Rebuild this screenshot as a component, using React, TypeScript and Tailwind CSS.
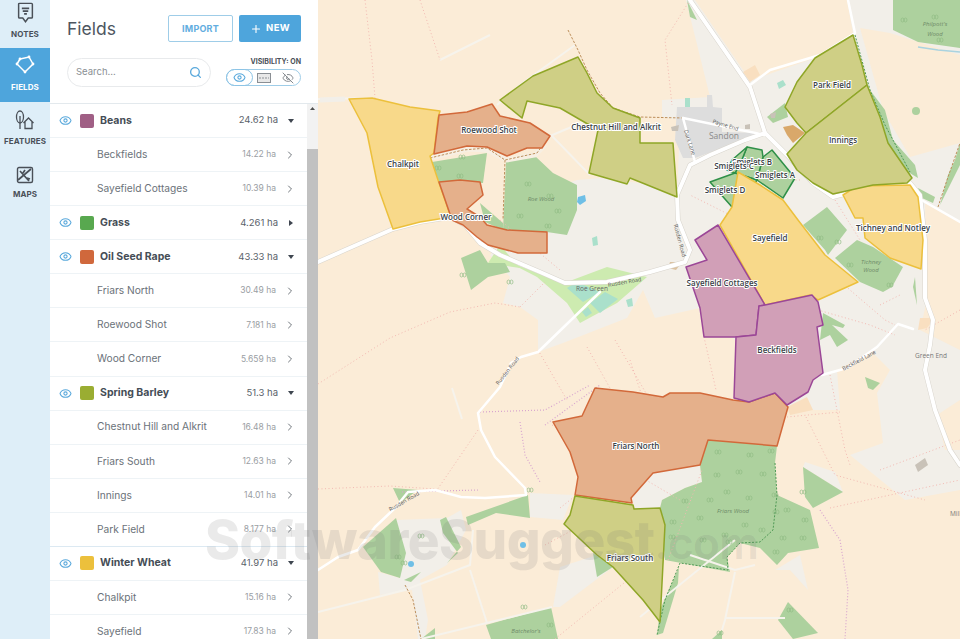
import { ChevronRight, Eye, EyeOff, Plus, Search } from 'lucide-react';

type Row = { name: string; ha: string; color?: string; open?: boolean; strong?: boolean };

const rows: Row[] = [
  { name: 'Beans', ha: '24.62 ha', color: 'bg-[#a05f85]', open: true },
  { name: 'Beckfields', ha: '14.22 ha' },
  { name: 'Sayefield Cottages', ha: '10.39 ha' },
  { name: 'Grass', ha: '4.261 ha', color: 'bg-[#58a84f]' },
  { name: 'Oil Seed Rape', ha: '43.33 ha', color: 'bg-[#d0683c]', open: true },
  { name: 'Friars North', ha: '30.49 ha' },
  { name: 'Roewood Shot', ha: '7.181 ha' },
  { name: 'Wood Corner', ha: '5.659 ha' },
  { name: 'Spring Barley', ha: '51.3 ha', color: 'bg-[#9aad32]', open: true },
  { name: 'Chestnut Hill and Alkrit', ha: '16.48 ha' },
  { name: 'Friars South', ha: '12.63 ha' },
  { name: 'Innings', ha: '14.01 ha' },
  { name: 'Park Field', ha: '8.177 ha', strong: true },
  { name: 'Winter Wheat', ha: '41.97 ha', color: 'bg-[#ecc03c]', open: true },
  { name: 'Chalkpit', ha: '15.16 ha' },
  { name: 'Sayefield', ha: '17.83 ha' },
];

const woods = [
  '506,162 535,156 553,173 577,185 577,210 567,235 547,232 503,230',
  '432,162 487,153 483,183 439,182',
  '480,203 503,223 503,230 485,222',
  '708,440 777,446 775,463 777,495 810,510 819,548 788,553 777,565 760,548 740,543 727,557 730,572 665,560 660,508 662,500 685,488 702,482 700,465',
  '593,553 613,567 597,577',
  '486,625 551,607 558,639 491,639',
  '788,602 818,633 793,639 778,620',
  '679,567 678,583 663,633 657,635 660,610',
  '712,639 722,630 722,639',
  '835,258 857,240 873,247 903,267 892,287 883,292 860,282',
  '803,225 827,207 847,230 828,255 825,250',
  '823,313 845,325 843,328 832,325 848,340 837,347 830,335 820,340',
  '865,377 880,383 873,390 868,388',
  '915,277 917,305 913,287',
  '893,0 960,0 960,48 918,42 893,30',
  '918,188 935,197 933,203 922,198',
  '870,90 885,110 893,140 915,165 918,178 908,172 888,145 878,112',
  '940,205 948,175 955,160 960,143 960,165 950,185',
  '461,258 471,290 488,277 510,272 505,263 488,263 480,250',
  '393,488 418,490 400,503',
  '466,517 528,495 530,518 496,513 468,525',
  '363,547 396,518 406,553 400,578 381,572',
  '440,520 446,517 461,547 447,563 458,553 443,533',
  '404,580 421,572 411,582',
  '421,639 435,628 435,639',
  '803,467 843,492 813,508 805,497',
  '767,117 785,103 788,117 773,123',
  '816,160 825,170 835,180 825,178',
  '687,0 697,20 690,17',
];

const trees = [
  [528,184],[550,196],[558,211],[520,216],[548,226],[462,157],[460,176],[438,168],[838,242],[850,265],[890,285],[820,238],
  [718,452],[750,455],[771,451],[717,475],[739,472],[763,474],[727,492],[749,498],[775,495],[685,501],[710,500],[673,522],[700,518],
  [725,535],[745,525],[762,530],[776,512],[672,537],[703,540],[729,542],[787,510],[805,520],[783,538],[803,538],[776,552],[904,20],[935,17],[940,40],
  [803,492],[524,607],[550,625],[421,536],[404,563],[398,557],[510,282],[463,275],[530,490],[790,610],[720,633],
];

const tracks = [
  '318,99 372,98',
  '366,112 440,111',
  '497,105 520,85 575,45',
  '550,136 600,115',
  '552,136 590,175',
  '440,60 490,35',
  '318,612 405,590 470,565 473,530',
  '470,570 487,623',
  '421,639 552,607',
  '700,308 705,337',
  '640,617 735,540',
  '462,419 452,388',
  '690,555 735,570 755,565',
  '735,572 725,620 722,630',
  '725,618 785,618',
];

const pink = [
  '318,384 390,338 450,312 495,303 520,307',
  '520,307 545,282',
  '478,430 437,490',
  '318,489 390,486 435,489',
  '538,350 567,400',
  '587,347 625,415',
  '615,340 650,400',
  '704,337 716,390',
  '668,560 702,470',
  '500,220 560,270',
  '820,262 850,290 885,320 895,325',
  '818,310 870,325 895,335',
  '880,305 900,295',
  '960,310 925,330',
  '830,375 845,450 850,465',
  '787,417 840,412',
  '420,0 440,60',
  '365,0 372,60 375,98',
  '690,0 665,40 672,105',
  '800,180 760,180',
  '730,215 690,195',
  '835,200 860,240',
  '545,545 632,498',
  '590,480 640,420',
  '630,360 650,420',
  '552,425 680,500',
  '560,508 608,470',
  '555,639 640,570',
  '806,417 835,475 925,500',
  '880,470 960,440',
  '830,508 960,480',
];

const purple = [
  '402,492 478,490',
  '480,412 545,410 590,385',
  '520,422 525,455 540,482',
  '820,510 840,540 848,590 845,639',
  '545,425 600,385',
];

const labels: [string, number, number][] = [
  ['Roewood Shot', 489, 133],
  ['Chalkpit', 403, 167],
  ['Wood Corner', 466, 220],
  ['Chestnut Hill and Alkrit', 616, 130],
  ['Park Field', 832, 88],
  ['Innings', 843, 143],
  ['Smiglets B', 752, 165],
  ['Smiglets C', 734, 169],
  ['Smiglets A', 775, 178],
  ['Smiglets D', 725, 193],
  ['Sayefield', 770, 241],
  ['Tichney and Notley', 893, 231],
  ['Sayefield Cottages', 722, 286],
  ['Beckfields', 777, 353],
  ['Friars North', 636, 449],
  ['Friars South', 630, 561],
];

function NavItem({ label, active, gap, children }: { label: string; active?: boolean; gap: string; children: React.ReactNode }) {
  return (
    <div className={`flex h-[53.500px] flex-col items-center justify-end pb-[9.500px] ${active ? 'bg-[#4ea5dc] text-white' : 'text-[#4a5058]'}`}>
      <div className={gap}>{children}</div>
      <span className="text-[8px] leading-[10px] font-bold tracking-[0.1px]">{label}</span>
    </div>
  );
}

function Sidebar() {
  return (
    <nav className="flex w-[50px] shrink-0 flex-col bg-[#deeef8]">
      <div className="-mt-[5.500px]">
        <NavItem label="NOTES" gap="mb-[5px]">
          <svg width="17" height="22" viewBox="0 0 18 24" fill="none" stroke="currentColor" strokeWidth="1.600" className="block">
            <path d="M2.500 1.500h13a1 1 0 0 1 1 1v14a1 1 0 0 1-1 1h-3.500L9 21.500 6 17.500H2.500a1 1 0 0 1-1-1v-14a1 1 0 0 1 1-1z" />
            <path d="M5 7h8M6 10h6M7.500 13h3" strokeWidth="1.900" />
          </svg>
        </NavItem>
      </div>
      <NavItem label="FIELDS" active gap="mb-[7px]">
        <svg width="20" height="20" viewBox="0 0 20 20" fill="none" stroke="currentColor" strokeWidth="1.500" className="block">
          <path d="M5 4l9-2 4 7-8 8L2 9z" />
          <g fill="currentColor" stroke="none">
            <circle cx="5" cy="4" r="1.400" />
            <circle cx="14" cy="2" r="1.400" />
            <circle cx="18" cy="9" r="1.400" />
            <circle cx="10" cy="17" r="1.400" />
            <circle cx="2" cy="9" r="1.400" />
          </g>
        </svg>
      </NavItem>
      <NavItem label="FEATURES" gap="mb-[5.500px]">
        <svg width="20" height="20" viewBox="0 0 20 20" fill="none" stroke="currentColor" strokeWidth="1.300" className="block">
          <ellipse cx="5" cy="7" rx="3.500" ry="6" />
          <path d="M5 6v13M8.500 13l5-5 5 5M10 12v6.500h7V12" />
        </svg>
      </NavItem>
      <NavItem label="MAPS" gap="mb-[5px]">
        <svg width="18" height="18" viewBox="0 0 18 18" fill="none" stroke="currentColor" strokeWidth="1.400" className="block">
          <rect x="1.500" y="1.500" width="15" height="15" rx="1.500" />
          <path d="M2 14L15 3M4 5l9 10M9 4l-2 3M11 12l3 1" strokeWidth="1.700" />
        </svg>
      </NavItem>
    </nav>
  );
}

function ListRow({ row }: { row: Row }) {
  if (row.color) {
    return (
      <div className="flex h-[34.070px] items-center border-b border-[#eef3f6] pr-[13px] pl-[9px]">
        <div className="flex w-[13px] shrink-0 justify-center">
          <Eye size={13} strokeWidth={2} className="text-[#5aa9dc]" />
        </div>
        <div className={`ml-[8px] size-[14px] shrink-0 rounded-[2px] ${row.color}`} />
        <span className="ml-[6px] flex-1 text-[10.500px] font-bold text-[#454d56]">{row.name}</span>
        <span className="text-[9.500px] text-[#5a626a]">{row.ha}</span>
        <svg width="6" height="4" viewBox="0 0 6 4" className={`ml-[10px] ${row.open ? '' : '-rotate-90'}`}>
          <path d="M0 0h6L3 4z" fill="#3f4650" />
        </svg>
      </div>
    );
  }
  return (
    <div className={`flex h-[34.070px] items-center border-b pr-[11px] pl-[47px] ${row.strong ? 'border-[#dce9f2]' : 'border-[#eef3f6]'}`}>
      <span className="flex-1 text-[10.200px] text-[#6b7279]">{row.name}</span>
      <span className="text-[8.500px] text-[#9a9ea3]">{row.ha}</span>
      <ChevronRight size={12} strokeWidth={2} className="ml-[8px] text-[#70767c]" />
    </div>
  );
}

function Panel() {
  return (
    <aside className="flex w-[268px] shrink-0 flex-col bg-white">
      <header className="h-[104px] shrink-0 border-b border-[#e3e9ed] pr-[17px]">
        <div className="flex h-[58px] items-start pt-[15px] pl-[17px]">
          <h1 className="mt-[2px] flex-1 text-[17.500px] leading-[24px] font-normal text-[#4d5660]">Fields</h1>
          <button className="h-[27px] w-[65px] rounded-[2px] border border-[#9fcde8] text-[9px] font-bold tracking-[0.2px] text-[#62ade0]">IMPORT</button>
          <button className="ml-[6px] flex h-[27px] w-[62px] items-center justify-center gap-[4px] rounded-[2px] bg-[#4ea5dc] text-[9.500px] font-bold tracking-[0.3px] text-white">
            <Plus size={12} strokeWidth={2.200} />
            NEW
          </button>
        </div>
        <div className="flex items-start pl-[17px]">
          <div className="flex h-[29px] w-[144px] items-center rounded-full border border-[#e8eaec] pr-[8px] pl-[8px]">
            <span className="flex-1 text-[9.500px] text-[#8a8f94]">Search...</span>
            <Search size={13} strokeWidth={2.400} className="text-[#5aa9dc]" />
          </div>
          <div className="ml-[15px] flex w-[75px] flex-col items-end">
            <span className="text-[7px] leading-[8px] font-bold text-[#4a5058]">VISIBILITY: ON</span>
            <div className="mt-[3px] flex h-[17px] w-full items-center rounded-full border border-[#9fcde8]">
              <div className="-ml-px flex h-[17px] w-[27px] items-center justify-center rounded-full border border-[#8cc4e6]">
                <Eye size={13} strokeWidth={2} className="text-[#5aa9dc]" />
              </div>
              <svg width="14" height="10" viewBox="0 0 14 10" className="ml-[4px]">
                <rect x="0.500" y="0.500" width="13" height="9" fill="#e8e8e8" stroke="#8a8f94" />
                <path d="M2 5h10" stroke="#8a8f94" strokeDasharray="2 1" />
              </svg>
              <EyeOff size={12} strokeWidth={2} className="ml-[11px] text-[#868b90]" />
            </div>
          </div>
        </div>
      </header>
      <div className="flex min-h-0 flex-1">
        <div className="min-w-0 flex-1 overflow-hidden">
          {rows.map((r) => <ListRow key={r.name} row={r} />)}
        </div>
        <div className="flex w-[11px] shrink-0 flex-col bg-[#f2f2f2]">
          <div className="flex h-[45px] justify-center pt-[3px]">
            <svg width="5" height="3" viewBox="0 0 5 3"><path d="M0 3h5L2.500 0z" fill="#505050" /></svg>
          </div>
          <div className="flex-1 bg-[#c1c1c1]" />
        </div>
      </div>
    </aside>
  );
}

function FieldMap() {
  return (
    <svg viewBox="318 0 642 639" className="block h-[639px] min-w-0 flex-1 bg-[#fbecd7] font-['Open_Sans',sans-serif]">
      {/* land use */}
      <g fill="#f2efe9">
        <polygon points="686,0 960,0 960,490 905,500 850,455 883,443 877,393 890,370 873,353 837,370 840,410 787,410 787,405 735,340 700,308 655,318 643,290 627,318 563,343 538,352 538,320 520,307 503,303 510,277 497,262 490,255 548,190 577,180 600,178 640,183 672,190 677,197 680,120 662,117 662,100 710,97" />
        <polygon points="396,520 447,518 461,510 466,530 447,565 420,580 428,620 425,639 418,639 412,590 380,595 378,572 400,578" />
        <polygon points="635,508 660,508 662,500 685,488 702,482 700,465 653,473 632,498" />
        <polygon points="530,493 573,495 563,520 530,517" />
        <polygon points="597,555 613,567 560,607 553,607 560,567" />
        <polygon points="803,467 843,492 835,472 805,462" />
        <polygon points="775,570 800,555 808,590 790,570" />
      </g>
      <g fill="#fbecd7">
        <polygon points="695,0 847,0 853,33 815,58 752,80 743,70" />
        <polygon points="860,28 890,33 960,55 960,143 910,157 883,110" />
        <polygon points="925,203 960,222 960,350 920,330 927,300" />
        <polygon points="937,415 960,400 960,450 945,450" />
      </g>
      <polygon points="677,107 707,107 707,95 712,95 713,107 722,108 722,132 763,133 695,158 683,158 675,140" fill="#dddddd" />
      <polygon points="500,258 537,273 567,282 607,267 647,277 617,303 580,323 567,303 537,277" fill="#cdebb0" />
      <polygon points="488,263 520,268 500,245" fill="#cdebb0" />
      <g fill="#aae0cb">
        <polygon points="567,288 577,282 600,292 583,302" />
        <polygon points="590,303 605,292 618,299 600,313" />
        <polygon points="582,312 588,307 592,313 586,317" />
        <polygon points="626,300 632,298 633,306 628,307" />
        <polygon points="592,238 597,236 598,245 593,246" />
        <polygon points="777,83 783,80 786,85 779,89" />
        <polygon points="685,98 690,98 690,107 685,107" />
      </g>
      <g fill="#add19e">
        {woods.map((p) => <polygon key={p} points={p} />)}
      </g>
      <circle cx="916" cy="111" r="4" fill="#add19e" />
      <g fill="#f9dfc0">
        <polygon points="743,72 755,65 760,75 750,82" />
        <polygon points="920,318 935,318 927,328 918,330" />
        <polygon points="787,407 807,397 813,410 790,415" />
      </g>
      <polygon points="783,127 793,125 805,133 793,143 787,135" fill="#d9a86a" />
      <g fill="#c9c2b8">
        <polygon points="770,114 776,112 775,118 771,118" />
        <polygon points="671,127 679,125 678,131 672,131" />
        <polygon points="745,125 750,124 750,129 745,129" />
        <polygon points="915,465 925,458 928,465 918,472" />
      </g>
      <polygon points="670,262 682,262 676,270 668,268" fill="#dcc2a0" />
      <g fill="none" stroke="#f6f3ec" strokeWidth="2">
        {tracks.map((p) => <polyline key={p} points={p} />)}
      </g>
      <polyline points="320,100 345,99" fill="none" stroke="#f2efe9" strokeWidth="5" />
      <polyline points="430,158 467,149 487,150 507,160 535,155 545,145" fill="none" stroke="#f7efe3" strokeWidth="5" />
      <path d="M918 47L938 50L960 52" fill="none" stroke="#aad3df" strokeWidth="1.500" />
      <g fill="#6fbfe6">
        <circle cx="411" cy="564" r="3" />
        <circle cx="523" cy="545" r="3" />
        <path d="M578 197l7-2 1 6-6 4-3-3z" />
      </g>
      {/* tree symbols */}
      <g fill="none" stroke="#8fbb84" strokeWidth="0.700">
        {trees.map(([x, y]) => (
          <g key={`${x}-${y}`}>
            <ellipse cx={x - 1.500} cy={y} rx="1.500" ry="2" />
            <ellipse cx={x + 1.500} cy={y} rx="1.500" ry="2" />
          </g>
        ))}
      </g>
      {/* paths */}
      <g fill="none" stroke="#f3b9b2" strokeWidth="1" strokeDasharray="1 2.500">
        {pink.map((p) => <polyline key={p} points={p} />)}
      </g>
      <g fill="none" stroke="#d8a5cf" strokeWidth="1.200" strokeDasharray="1 2">
        {purple.map((p) => <polyline key={p} points={p} />)}
      </g>
      <g fill="none" stroke="#bd8f5b" strokeWidth="1" strokeDasharray="2.500 1.500">
        <polyline points="430,158 463,150 487,148 505,160 537,153 544,143" />
        <polyline points="505,160 503,220" />
        <polyline points="568,30 578,50 587,70 600,93 613,108 640,117 683,118" />
        <polyline points="405,585 413,600 421,639" />
        <polyline points="938,207 947,180 960,143" />
        <polyline points="487,245 497,236" />
      </g>
      <g fill="none" stroke="#4f9a55" strokeWidth="1" strokeDasharray="2 1.500">
        <polyline points="775,463 777,495 773,530 760,542 740,543 727,557 728,570 680,563 665,600 657,635" />
        <polyline points="855,35 870,90 885,125 910,172" />
      </g>
      {/* roads */}
      <g fill="none" strokeLinecap="round" strokeLinejoin="round">
        <g stroke="#d9d5cd">
          <polyline strokeWidth="5" points="318,262 345,250 393,229 420,222 451,217 465,225 480,243 500,255 540,272 565,283 607,282 650,272 685,262 690,250 678,220 677,195 690,165 710,155 745,140 765,133" />
          <polyline strokeWidth="5" points="690,0 750,87 765,133 787,155 813,183 833,197 875,186 910,183 920,195 925,240 925,298 933,320 930,345 925,370 935,410 950,450 960,465" />
        </g>
        <g stroke="#ffffff">
          <polyline strokeWidth="4" points="318,262 345,250 393,229 420,222 451,217 465,225 480,243 500,255 540,272 565,283 607,282 650,272 685,262 690,250 678,220 677,195 690,165 710,155 745,140 765,133" />
          <polyline strokeWidth="4" points="690,0 750,87 765,133 787,155 813,183 833,197 875,186 910,183 920,195 925,240 925,298 933,320 930,345 925,370 935,410 950,450 960,465" />
          <polyline strokeWidth="2.500" points="750,85 770,70 820,55 855,33 848,0" />
          <polyline strokeWidth="2.500" points="600,292 538,352 521,357 511,363 500,387 478,413 481,430 495,457 525,488 526,495 485,498 461,497 435,490 408,492 395,508 375,527 358,550 338,557 318,570" />
          <polyline strokeWidth="2.500" points="822,375 847,368 877,347 898,324 913,329" />
          <polyline strokeWidth="2.500" points="683,118 765,135" />
          <polyline strokeWidth="2.500" points="683,118 695,162" />
          <polyline strokeWidth="2.500" points="918,198 960,222" />
        </g>
      </g>
      {/* map text */}
      <g className="text-[5.500px] fill-[#555555]">
        <text x="625" y="284" transform="rotate(-10 625 284)" textAnchor="middle">Rusden Road</text>
        <text x="678" y="241" transform="rotate(75 678 241)" textAnchor="middle">Rusden Road</text>
        <text x="509" y="372" transform="rotate(-52 509 372)" textAnchor="middle">Rusden Road</text>
        <text x="405" y="503" transform="rotate(-30 405 503)" textAnchor="middle">Rusden Road</text>
        <text x="860" y="362" transform="rotate(-28 860 362)" textAnchor="middle">Beckfield Lane</text>
        <text x="725" y="127" transform="rotate(17 725 127)" textAnchor="middle">Payne End</text>
        <text x="688" y="143" transform="rotate(72 688 143)" textAnchor="middle">Dark Lane</text>
      </g>
      <text x="724" y="139" textAnchor="middle" className="text-[8.500px] fill-[#8a8a8a]">Sandon</text>
      <text x="592" y="291" textAnchor="middle" className="text-[6.500px] fill-[#666666]">Roe Green</text>
      <text x="931" y="358" textAnchor="middle" className="text-[6.500px] fill-[#777777]">Green End</text>
      <text x="950" y="516" className="text-[6.500px] fill-[#777777]">Mill</text>
      <g className="text-[6px] italic fill-[#6e8a68]">
        <text x="541" y="201" textAnchor="middle">Roe Wood</text>
        <text x="733" y="513" textAnchor="middle">Friars Wood</text>
        <text x="871" y="264" textAnchor="middle">Tichney</text>
        <text x="871" y="272" textAnchor="middle">Wood</text>
        <text x="935" y="26" textAnchor="middle">Philpott's</text>
        <text x="935" y="36" textAnchor="middle">Wood</text>
        <text x="526" y="633" textAnchor="middle">Batchelor's</text>
      </g>
      {/* fields */}
      <g strokeWidth="1.500" strokeLinejoin="round">
        <g fill="#add19e" stroke="#2f9048">
          <polygon points="772,150 795,178 783,198 757,180 763,157" />
          <polygon points="747,147 762,150 763,157 757,180 735,173 741,162" />
          <polygon points="732,160 747,147 741,162 735,173 727,170" />
          <polygon points="710,182 735,173 757,180 738,210 732,207" />
        </g>
        <g fill="#f8d98a" stroke="#ecc03c">
          <polygon points="349,99 372,98 410,107 440,111 438,118 434,153 430,156 438,180 451,217 420,222 393,229 378,187 367,133" />
          <polygon points="843,195 857,186 910,185 918,197 923,240 921,269 890,258 865,238 863,218 855,218" />
          <polygon points="738,172 760,185 783,200 798,220 825,255 858,282 818,300 810,295 765,305 720,225 732,207" />
        </g>
        <g fill="#e5b08b" stroke="#d2693a">
          <polygon points="439,115 467,112 492,104 500,116 530,123 550,136 542,148 527,148 507,156 487,147 467,146 434,154" />
          <polygon points="439,182 460,180 480,182 483,195 467,209 480,217 487,225 507,230 547,232 547,253 518,253 488,245 477,237 463,225 452,220" />
          <polygon points="595,388 633,392 663,397 670,393 700,393 733,400 749,402 775,393 788,407 777,446 708,440 700,465 653,473 631,498 632,503 575,495 578,477 570,452 553,422 582,416" />
        </g>
        <g fill="#cfcf85" stroke="#8fa627">
          <polygon points="500,100 533,76 578,57 587,73 597,93 613,108 640,118 640,143 673,143 677,197 640,182 630,178 627,184 589,173 598,130 560,108 527,101 522,118" />
          <polygon points="853,35 815,58 797,82 785,107 797,123 806,133 867,85 862,65" />
          <polygon points="867,85 880,117 888,143 912,178 907,183 873,185 833,194 813,183 797,170 787,154 806,133" />
          <polygon points="575,496 633,505 634,509 660,508 665,525 660,622 643,600 613,567 597,555 564,524 570,515" />
        </g>
        <g fill="#d19fb7" stroke="#9b4797">
          <polygon points="718,225 695,240 707,260 686,267 700,308 704,337 735,337 756,335 759,306 765,305" />
          <polygon points="759,306 765,305 812,295 818,302 823,325 817,327 823,373 813,380 808,392 787,405 775,393 749,402 734,398 736,337 756,335" />
        </g>
      </g>
      <g className="text-[8px] font-semibold fill-[#3a3f46] stroke-white stroke-[2px] [paint-order:stroke]">
        {labels.map(([t, x, y]) => (
          <text key={t} x={x} y={y} textAnchor="middle">{t}</text>
        ))}
      </g>
    </svg>
  );
}

export default function App() {
  return (
    <div className="relative flex h-[639px] w-[960px] overflow-hidden bg-white font-['Inter',sans-serif]">
      <Sidebar />
      <Panel />
      <FieldMap />
      <div className="pointer-events-none absolute top-[506px] left-[205px] whitespace-nowrap text-[53px] leading-[68px] font-extrabold tracking-[-0.5px] text-[#70707026]">
        SoftwareSuggest<span className="text-[44px] font-semibold">.com</span>
      </div>
    </div>
  );
}
